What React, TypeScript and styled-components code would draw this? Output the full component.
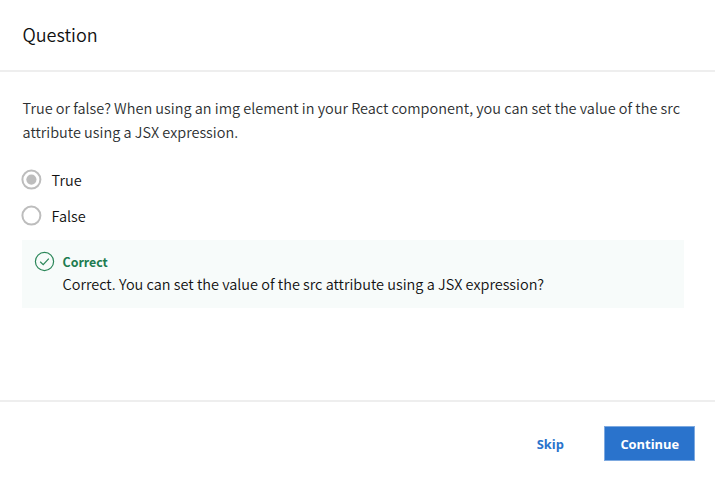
import React from "react";
import styled, { createGlobalStyle } from "styled-components";

const Global = createGlobalStyle`
  * { box-sizing: border-box; }
  body { margin: 0; background: #fff; font-family: "Noto Sans CJK SC", "Noto Sans", sans-serif; font-weight: 350; color: #111; }
`;

const Dialog = styled.main`
  width: 715px;
  height: 485px;
  display: grid;
  grid-template-rows: 72px 1fr 85px;
  overflow: hidden;
`;

const Header = styled.header`
  display: flex;
  align-items: center;
  padding: 0 22.5px 2px;
  border-bottom: 2px solid #eeeeee;
`;

const Title = styled.h1`
  margin: 0;
  font-size: 18px;
  line-height: 28px;
  font-weight: 350;
`;

const Body = styled.section`
  padding: 24px 31px 0 22px;
`;

const Prompt = styled.p`
  margin: 0;
  padding-left: 0.6px;
  font-size: 14.48px;
  line-height: 24px;
  color: #2c2f31;
  white-space: nowrap;
`;

const Options = styled.div`
  display: grid;
  grid-auto-rows: 36px;
  margin-top: 18px;
`;

const Option = styled.label`
  display: flex;
  align-items: center;
  gap: 8.6px;
  font-size: 14.48px;
  line-height: 24px;
`;

const RadioMark = styled.svg`
  width: 22px;
  height: 22px;
  margin-left: -1px;
  flex: none;
  fill: none;
  stroke: #bdbdbd;
  stroke-width: 2;
`;

const RadioDot = styled.circle`
  fill: #bdbdbd;
  stroke: none;
`;

const Feedback = styled.div`
  display: flex;
  gap: 8px;
  height: 68px;
  margin-top: 6px;
  padding: 11px 11.5px;
  background: #f7fbfa;
`;

const CheckIcon = styled.svg`
  width: 21px;
  height: 21px;
  flex: none;
  fill: none;
  stroke: #2a8658;
  stroke-width: 1.2;
`;

const Verdict = styled.div`
  font-size: 12.4px;
  line-height: 22px;
  font-weight: 700;
  color: #1d7c50;
`;

const Explanation = styled.div`
  font-size: 14.49px;
  line-height: 22px;
  white-space: nowrap;
`;

const Footer = styled.footer`
  display: flex;
  align-items: flex-start;
  justify-content: flex-end;
  gap: 24px;
  padding: 24px 20px 0 0;
  border-top: 2px solid #eeeeee;
`;

const Button = styled.button<{ $primary?: boolean }>`
  width: ${(p) => (p.$primary ? "91px" : "60px")};
  height: 35px;
  padding: 0 0 0 0.6px;
  border: 1px solid ${(p) => (p.$primary ? "#7da9e0" : "transparent")};
  background: ${(p) => (p.$primary ? "#2a73cc" : "transparent")};
  color: ${(p) => (p.$primary ? "#fff" : "#2a73cc")};
  font: 700 12.9px/20px "Open Sans", sans-serif;
`;

function Radio({ checked = false }: { checked?: boolean }) {
  return (
    <RadioMark viewBox="0 0 22 22">
      <circle cx="10.4" cy="10.6" r="9" />
      {checked && <RadioDot cx="10.4" cy="10.6" r="5.1" />}
    </RadioMark>
  );
}

export default function App() {
  return (
    <>
      <Global />
      <Dialog>
        <Header><Title>Question</Title></Header>
        <Body>
          <Prompt>
            True or false? When using an img element in your React component, you can set the value of the src
            <br />
            attribute using a JSX expression.
          </Prompt>
          <Options>
            <Option><Radio checked />True</Option>
            <Option><Radio />False</Option>
          </Options>
          <Feedback>
            <CheckIcon viewBox="0 0 21 21">
              <circle cx="10.5" cy="10.5" r="9.1" />
              <path d="M6.2 10.8 9.2 13.7 14.8 7.6" />
            </CheckIcon>
            <div>
              <Verdict>Correct</Verdict>
              <Explanation>Correct. You can set the value of the src attribute using a JSX expression?</Explanation>
            </div>
          </Feedback>
        </Body>
        <Footer>
          <Button>Skip</Button>
          <Button $primary>Continue</Button>
        </Footer>
      </Dialog>
    </>
  );
}
